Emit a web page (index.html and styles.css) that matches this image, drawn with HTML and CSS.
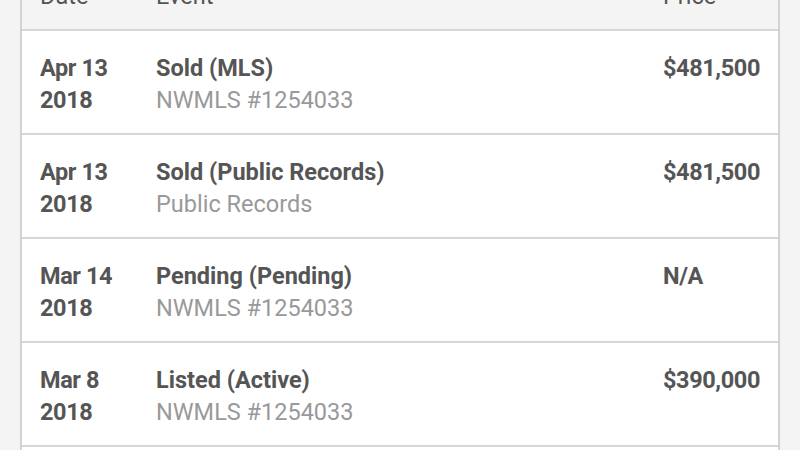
FILE: index.html
```html
<!DOCTYPE html>
<html lang="en">

<head>
    <meta charset="UTF-8">
    <meta name="viewport" content="width=device-width, initial-scale=1.0">
    <title>Property History</title>
    <link rel="stylesheet" href="styles.css">
</head>

<body>
    <div class="history">
        <div class="row head">
            <div class="cell">Date</div>
            <div class="cell">Event</div>
            <div class="cell">Price</div>
        </div>

        <div class="row">
            <div class="cell date">Apr 13<br>2018</div>
            <div class="cell">
                <div class="event">Sold (MLS)</div>
                <div class="source">NWMLS #1254033</div>
            </div>
            <div class="cell price">$481,500</div>
        </div>

        <div class="row">
            <div class="cell date">Apr 13<br>2018</div>
            <div class="cell">
                <div class="event">Sold (Public Records)</div>
                <div class="source">Public Records</div>
            </div>
            <div class="cell price">$481,500</div>
        </div>

        <div class="row">
            <div class="cell date">Mar 14<br>2018</div>
            <div class="cell">
                <div class="event">Pending (Pending)</div>
                <div class="source">NWMLS #1254033</div>
            </div>
            <div class="cell price">N/A</div>
        </div>

        <div class="row">
            <div class="cell date">Mar 8<br>2018</div>
            <div class="cell">
                <div class="event">Listed (Active)</div>
                <div class="source">NWMLS #1254033</div>
            </div>
            <div class="cell price">$390,000</div>
        </div>

        <div class="row">
            <div class="cell date">Feb 2<br>2018</div>
            <div class="cell">
                <div class="event">Listing Removed</div>
                <div class="source">NWMLS #1254033</div>
            </div>
            <div class="cell price">&mdash;</div>
        </div>
    </div>
</body>

</html>
```

FILE: styles.css
```css
body {
    margin: 0;
    background-color: #f4f4f4;
    font-family: Roboto, "Liberation Sans", Arial, sans-serif;
    font-size: 23.5px;
    line-height: 32px;
    color: #555;
    overflow: hidden;
}

.history {
    margin: -40px 20px 0;
    background-color: #fff;
    border-left: 2px solid #d2d2d2;
    border-right: 2px solid #d2d2d2;
}

.row {
    display: grid;
    grid-template-columns: 116px 1fr 133px;
    border-bottom: 2px solid #d6d6d6;
}

.cell {
    padding: 21px 18px 17px;
}

.head {
    background-color: #f4f4f4;
}

.head .cell {
    padding-top: 20px;
    padding-bottom: 17px;
}

.date,
.event,
.price {
    font-weight: bold;
}

.date,
.price {
    letter-spacing: -0.4px;
}

.source {
    color: #999;
}
```
